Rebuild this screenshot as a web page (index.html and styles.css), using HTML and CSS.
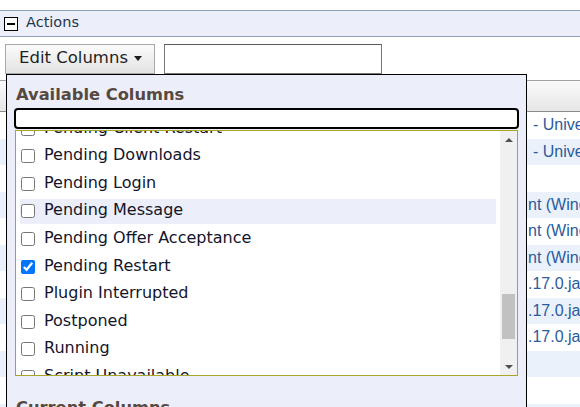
FILE: index.html
```html
<!DOCTYPE html>
<html>
<head>
<meta charset="utf-8">
<link rel="stylesheet" href="styles.css">
</head>
<body>
<div class="page">
  <div class="section-bar">
    <span class="toggle"><span class="toggle-dash"></span></span>
    <span class="section-title">Actions</span>
  </div>

  <div class="toolbar">
    <div class="dropdown">
      <button class="btn" type="button">Edit Columns<span class="caret"></span></button>
      <div class="panel">
        <h3 class="panel-title">Available Columns</h3>
        <input class="search" type="text">
        <div class="listbox">
          <div class="list-viewport">
            <ul class="list-items">
              <li class="item"><input type="checkbox"><span>Pending Client Restart</span></li>
              <li class="item"><input type="checkbox"><span>Pending Downloads</span></li>
              <li class="item"><input type="checkbox"><span>Pending Login</span></li>
              <li class="item hover"><input type="checkbox"><span>Pending Message</span></li>
              <li class="item"><input type="checkbox"><span>Pending Offer Acceptance</span></li>
              <li class="item"><input type="checkbox" checked><span>Pending Restart</span></li>
              <li class="item"><input type="checkbox"><span>Plugin Interrupted</span></li>
              <li class="item"><input type="checkbox"><span>Postponed</span></li>
              <li class="item"><input type="checkbox"><span>Running</span></li>
              <li class="item"><input type="checkbox"><span>Script Unavailable</span></li>
              <li class="item"><input type="checkbox"><span>Waiting</span></li>
            </ul>
          </div>
          <div class="scrollbar">
            <span class="sb-btn"><span class="tri-up"></span></span>
            <span class="sb-track"><span class="sb-thumb"></span></span>
            <span class="sb-btn"><span class="tri-down"></span></span>
          </div>
        </div>
        <h3 class="panel-title current">Current Columns</h3>
      </div>
    </div>
    <input class="filter" type="text">
  </div>

  <div class="grid">
    <div class="grid-head"></div>
    <div class="row"><span class="lead">BigFix Agent</span><span class="tail sep">- Universal Agent 9.5</span></div>
    <div class="row alt"><span class="lead">BigFix Agent</span><span class="tail sep">- Universal Agent 9.5</span></div>
    <div class="row"><span class="lead"></span><span class="tail"></span></div>
    <div class="row alt"><span class="lead">BigFix Clie</span><span class="tail">nt (Windows) 9.5.17</span></div>
    <div class="row"><span class="lead">BigFix Clie</span><span class="tail">nt (Windows) 9.5.17</span></div>
    <div class="row alt"><span class="lead">BigFix Clie</span><span class="tail">nt (Windows) 9.5.17</span></div>
    <div class="row"><span class="lead">BESAgent-9.5</span><span class="tail">.17.0.jar</span></div>
    <div class="row alt"><span class="lead">BESAgent-9.5</span><span class="tail">.17.0.jar</span></div>
    <div class="row"><span class="lead">BESAgent-9.5</span><span class="tail">.17.0.jar</span></div>
    <div class="row alt"><span class="lead"></span><span class="tail"></span></div>
    <div class="row"><span class="lead"></span><span class="tail"></span></div>
    <div class="row alt"><span class="lead"></span><span class="tail"></span></div>
  </div>
</div>
</body>
</html>
```

FILE: styles.css
```css
html, body {
  margin: 0;
  padding: 0;
  overflow: hidden;
  background: #fff;
}
body {
  width: 580px;
  height: 407px;
  font-family: "DejaVu Sans", Verdana, sans-serif;
}
.page {
  padding-top: 10px;
}

/* Section bar */
.section-bar {
  display: flex;
  align-items: center;
  gap: 8px;
  height: 25px;
  padding-left: 4px;
  background: #eceff9;
  border-top: 1px solid #8ca3bb;
  border-bottom: 1px solid #8ca3bb;
}
.toggle {
  width: 14px;
  height: 14px;
  box-sizing: border-box;
  border: 1px solid #000;
  background: #fff;
  display: flex;
  align-items: center;
  justify-content: center;
}
.toggle-dash {
  width: 8px;
  height: 2px;
  background: #000;
}
.section-title {
  font-size: 14.5px;
  color: #23364a;
  padding-bottom: 4px;
}

/* Toolbar */
.toolbar {
  display: flex;
  gap: 9px;
  margin-top: 7px;
  padding-left: 5px;
  height: 30px;
}
.dropdown {
  position: relative;
}
.btn {
  display: flex;
  align-items: center;
  width: 150px;
  height: 30px;
  box-sizing: border-box;
  margin: 0;
  padding: 0 0 4px 13px;
  border: 1px solid #a9a9a9;
  border-radius: 0;
  background: linear-gradient(#fbfbfb, #e3e3e3);
  font-family: "DejaVu Sans", Verdana, sans-serif;
  font-size: 16.5px;
  color: #1e1e1e;
}
.caret {
  margin-left: 6px;
  margin-top: 3px;
  width: 0;
  height: 0;
  border-left: 4px solid transparent;
  border-right: 4px solid transparent;
  border-top: 5px solid #1e1e1e;
}
.filter {
  width: 218px;
  height: 30px;
  box-sizing: border-box;
  margin: 0;
  border: 1px solid #767676;
  border-top-color: #5a5a5a;
  background: #fff;
}

/* Dropdown panel */
.panel {
  position: absolute;
  left: 1px;
  top: 30px;
  z-index: 5;
  width: 521px;
  height: 380px;
  box-sizing: border-box;
  padding: 9.5px 7px 0;
  border: 1px solid #000;
  background: #eceff9;
}
.panel-title {
  margin: 0;
  padding-left: 2px;
  font-size: 16.3px;
  line-height: 20px;
  font-weight: bold;
  color: #574840;
}
.panel-title.current {
  margin-top: 22px;
}
.search {
  display: block;
  width: 100%;
  height: 21px;
  box-sizing: border-box;
  margin: 3.5px 0 0;
  border: 2px solid #000;
  border-radius: 4px;
  background: #fff;
  outline: none;
}
.listbox {
  display: flex;
  height: 246px;
  box-sizing: border-box;
  margin: 1px 1px 0;
  border: 1px solid #a8a628;
  background: #fff;
}
.list-viewport {
  flex: 1;
  overflow: hidden;
}
.list-items {
  list-style: none;
  margin: -14.7px 0 0;
  padding: 0 4px;
}
.item {
  display: flex;
  align-items: center;
  height: 24.6px;
  margin-bottom: 3px;
  font-size: 16px;
  color: #14142a;
  white-space: nowrap;
}
.item span {
  margin-bottom: 3px;
}
.item.hover {
  background: #eceff9;
}
.item input {
  width: 14px;
  height: 14px;
  margin: 0 9px 0 1px;
}

/* Scrollbar */
.scrollbar {
  width: 17px;
  display: flex;
  flex-direction: column;
  background: #f0f0f0;
}
.sb-btn {
  height: 17px;
  display: flex;
  align-items: center;
  justify-content: center;
}
.tri-up {
  width: 0;
  height: 0;
  border-left: 4px solid transparent;
  border-right: 4px solid transparent;
  border-bottom: 4px solid #505050;
}
.tri-down {
  width: 0;
  height: 0;
  border-left: 4px solid transparent;
  border-right: 4px solid transparent;
  border-top: 4px solid #505050;
}
.sb-track {
  flex: 1;
}
.sb-thumb {
  display: block;
  width: 13px;
  height: 45px;
  margin: 146px 0 0 2px;
  background: #c1c1c1;
}

/* Grid behind */
.grid {
  margin-top: 6px;
}
.grid-head {
  height: 32px;
  box-sizing: border-box;
  border-top: 1px solid #a2a2a2;
  border-bottom: 1px solid #8a8a8a;
  background: linear-gradient(#fafafa, #e6e6e6);
}
.row {
  display: grid;
  grid-template-columns: 527px 1fr;
  align-items: center;
  height: 26.5px;
  font-family: "Liberation Sans", Arial, sans-serif;
  font-size: 16px;
  color: #2a5b9c;
  white-space: nowrap;
  overflow: hidden;
}
.row.alt {
  background: #eaf1fb;
}
.lead {
  text-align: right;
  overflow: hidden;
}
.tail {
  padding-left: 1px;
  overflow: hidden;
}
.tail.sep {
  padding-left: 6px;
}
```
